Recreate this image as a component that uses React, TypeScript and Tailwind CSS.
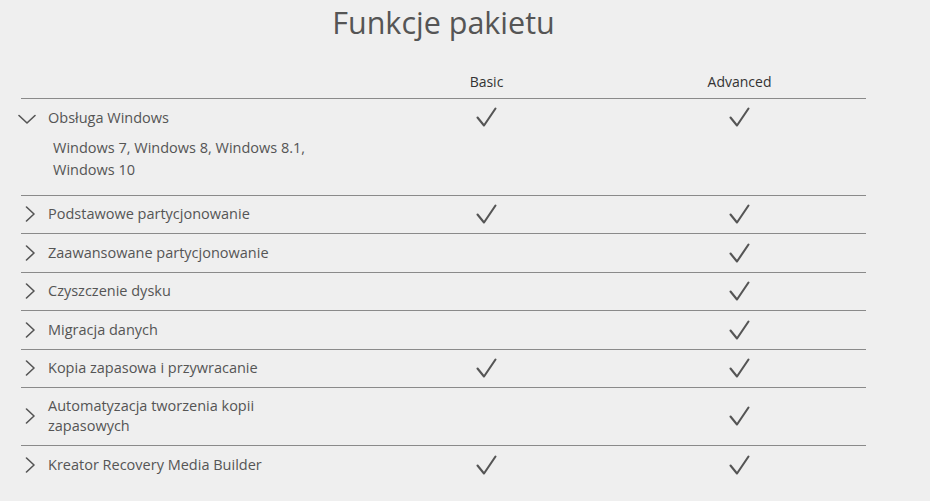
import React from 'react';

type Feature = {
  title: string;
  basic: boolean;
  advanced: boolean;
  open?: boolean;
  details?: string[];
  tall?: boolean;
};

const features: Feature[] = [
  {
    title: 'Obsługa Windows',
    basic: true,
    advanced: true,
    open: true,
    details: ['Windows 7, Windows 8, Windows 8.1,', 'Windows 10'],
  },
  { title: 'Podstawowe partycjonowanie', basic: true, advanced: true },
  { title: 'Zaawansowane partycjonowanie', basic: false, advanced: true },
  { title: 'Czyszczenie dysku', basic: false, advanced: true },
  { title: 'Migracja danych', basic: false, advanced: true },
  { title: 'Kopia zapasowa i przywracanie', basic: true, advanced: true },
  { title: 'Automatyzacja tworzenia kopii zapasowych', basic: false, advanced: true, tall: true },
  { title: 'Kreator Recovery Media Builder', basic: true, advanced: true },
];

function Check() {
  return (
    <svg width="21" height="20" viewBox="0 0 21 20" fill="none" className="block">
      <path d="M1.5 10.5 L8 18.5 L19.5 1.5" stroke="#555" strokeWidth="2.1" strokeLinecap="round" strokeLinejoin="round" />
    </svg>
  );
}

function Chevron({ open }: { open?: boolean }) {
  if (open) {
    return (
      <svg width="18" height="10" viewBox="0 0 18 10" fill="none" className="block -ml-[3px] mr-[12px] mt-[1px]">
        <path d="M1 1.5 L9 9 L17 1.5" stroke="#555" strokeWidth="1.6" strokeLinecap="round" strokeLinejoin="round" />
      </svg>
    );
  }
  return (
    <svg width="11" height="16" viewBox="0 0 11 16" fill="none" className="block ml-[4px] mr-[12px]">
      <path d="M1.5 1 L9 8 L1.5 15" stroke="#555" strokeWidth="1.6" strokeLinecap="round" strokeLinejoin="round" />
    </svg>
  );
}

function Row({ f, i, last }: { f: Feature; i: number; last: boolean }) {
  const border = last ? '' : 'border-b border-[#8a8a8a]';
  if (f.open) {
    return (
      <div className={`grid grid-cols-[339px_253px_253px] ${border}`}>
        <div className="pt-[8px] pb-[14px]">
          <div className="flex items-center h-[22px]">
            <Chevron open />
            <span className="text-[14.5px] leading-[22px]">{f.title}</span>
          </div>
          <div className="mt-[8px] pl-[32px] text-[14.5px] leading-[22px]">
            {f.details?.map((d) => (
              <div key={d}>{d}</div>
            ))}
          </div>
        </div>
        <div className="flex justify-center pt-[8px]">{f.basic && <Check />}</div>
        <div className="flex justify-center pt-[8px]">{f.advanced && <Check />}</div>
      </div>
    );
  }
  const height = f.tall ? 'h-[58px]' : i % 2 === 1 ? 'h-[38px]' : 'h-[39px]';
  return (
    <div className={`grid grid-cols-[339px_253px_253px] ${border} ${height}`}>
      <div className="flex items-center pb-[1px]">
        <Chevron />
        <span className={`text-[14.5px] ${f.tall ? 'leading-[20px] w-[260px]' : 'leading-[22px]'}`}>{f.title}</span>
      </div>
      <div className="flex items-center justify-center pb-[1px]">{f.basic && <Check />}</div>
      <div className="flex items-center justify-center pb-[1px]">{f.advanced && <Check />}</div>
    </div>
  );
}

export default function App() {
  return (
    <div className="min-h-screen w-full bg-[#efefef] text-[#555] font-['Open_Sans',sans-serif] overflow-hidden">
      <div className="ml-[21px] w-[845px]">
        <h2 className="text-center text-[30.5px] font-normal leading-[40px] pt-[2px] text-[#555]">Funkcje pakietu</h2>
        <div className="grid grid-cols-[339px_253px_253px] h-[57px] items-end pb-[6px] border-b border-[#8a8a8a] text-[14px] leading-[20px] text-[#333]">
          <div />
          <div className="text-center">Basic</div>
          <div className="text-center">Advanced</div>
        </div>
        {features.map((f, i) => (
          <Row key={f.title} f={f} i={i} last={i === features.length - 1} />
        ))}
      </div>
    </div>
  );
}
